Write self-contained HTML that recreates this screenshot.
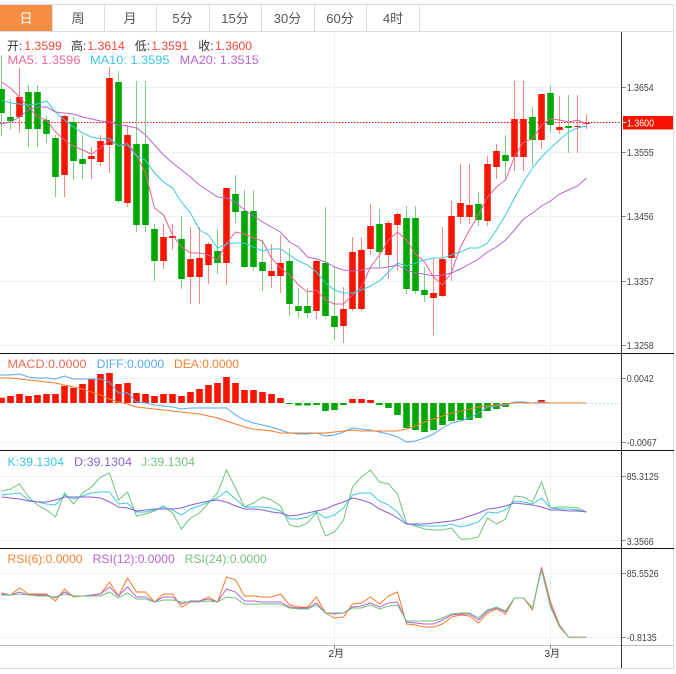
<!DOCTYPE html>
<html><head><meta charset="utf-8"><title>K线图</title>
<style>
html,body{margin:0;padding:0;background:#fff;width:676px;height:674px;overflow:hidden}
svg{display:block;font-family:"Liberation Sans","Noto Sans CJK SC",sans-serif}
.t{font-size:13px;fill:#555;text-anchor:middle}
.a{font-size:10px;fill:#444}
.l{font-size:12px}
</style></head><body>
<svg width="676" height="674" viewBox="0 0 676 674" xmlns="http://www.w3.org/2000/svg" fill="none">
<!-- frame and tabs -->
<rect x="0" y="5" width="52" height="26" fill="#f58d42"/>
<path d="M0 4.5H673.5V668.5H0M0 31.5H673M52.5 5V31M104.5 5V31M156.5 5V31M209.5 5V31M261.5 5V31M314.5 5V31M366.5 5V31M419.5 5V31" stroke="#dcdcdc"/>
<text x="26" y="23" class="t" style="fill:#fff">日</text>
<text x="78" y="23" class="t">周</text>
<text x="130" y="23" class="t">月</text>
<text x="182.500" y="23" class="t">5分</text>
<text x="235" y="23" class="t">15分</text>
<text x="287.500" y="23" class="t">30分</text>
<text x="340" y="23" class="t">60分</text>
<text x="393" y="23" class="t">4时</text>
<!-- grid -->
<path d="M0 87.500H621M0 152.500H621M0 216.500H621M0 281.500H621M0 345.500H621M0 378.500H621M0 442.500H621M0 476.500H621M0 540.500H621M0 573.500H621M0 637.500H621M334.500 32V645M550.500 32V645" stroke="#e9f1f4"/>
<!-- price line -->
<path d="M0 122.500H621" stroke="#f01010" stroke-dasharray="1.500 1.500"/>
<!-- wicks -->
<path stroke="#f88a80" d="M19.5 68V133M64.5 115V197M91.5 147V179M100.5 135V166M109.5 67V173M127.5 125V207M163.5 224V269M172.5 224V250M190.5 227V304M199.5 227V304M208.5 242V284M226.5 188V285M271.5 244V288M280.5 235V293M316.5 260V319M343.5 287V343M352.5 237V311M361.5 237V311M370.5 204V255M388.5 221V279M397.5 212V271M433.5 259V335M442.5 227V297M451.5 201V281M460.5 164V224M469.5 164V224M487.5 156V226M496.5 144V179M514.5 81V171M523.5 81V171M541.5 94V149M559.5 96V134M577.5 95V153M586.5 114V129"/>
<path stroke="#7fd07f" d="M1.5 55V136M10.5 99V130M28.5 85V147M37.5 85V147M46.5 116V143M55.5 135V197M73.5 117V180M82.5 135V179M118.5 71V203M136.5 81V232M145.5 81V232M154.5 224V281M181.5 216V289M217.5 229V274M235.5 175V223M244.5 190V268M253.5 190V271M262.5 240V291M289.5 248V316M298.5 288V318M307.5 288V318M325.5 207V318M334.5 267V340M379.5 209V267M406.5 206V294M415.5 206V294M424.5 267V302M478.5 192V226M505.5 135V181M532.5 107V166M550.5 85V133M568.5 95V153"/>
<!-- bodies -->
<path stroke="#f51500" stroke-width="6.600" d="M19.5 97V117M64.5 116V175M91.5 156V159M100.5 141V162M109.5 78V145M127.5 135V203M163.5 237V261M172.5 236V238M190.5 259V277M199.5 258V277M208.5 244V265M226.5 188V263M271.5 271V276M280.5 263V276M316.5 261V311M343.5 309V326M352.5 252V309M361.5 250V309M370.5 226V249M388.5 223V255M397.5 214V225M433.5 293V298M442.5 259V296M451.5 216V258M460.5 203V217M469.5 205V217M487.5 164V221M496.5 151V167M514.5 119V157M523.5 119V157M541.5 94V140M559.5 127V130M577.5 126V127M586.5 123V124"/>
<path stroke="#00a800" stroke-width="6.600" d="M1.5 89V113M10.5 117V121M28.5 92V129M37.5 92V129M46.5 120V134M55.5 138V177M73.5 122V161M82.5 159V164M118.5 82V201M136.5 144V225M145.5 144V225M154.5 229V261M181.5 239V279M217.5 251V263M235.5 194V212M244.5 211V267M253.5 211V267M262.5 262V271M289.5 261V304M298.5 306V311M307.5 306V313M325.5 263V316M334.5 316V327M379.5 224V252M406.5 218V289M415.5 218V291M424.5 290V295M478.5 204V220M505.5 155V161M532.5 117V140M550.5 93V125M568.5 126V128"/>
<!-- MA lines -->
<path stroke="#ec5f96" d="M1.5 82 10.5 88 19.5 97 28.5 107 37.5 117 46.5 120 55.5 132 64.500 140 73.5 146 82.5 150 91.5 154 100.5 148 109.5 140 118.5 146 127.5 143 136.5 155 145.5 173 154.5 208 163.5 215 172.5 235 181.5 247 190.5 253 199.5 253 208.5 255 217.5 260 226.5 243 235.5 232 244.5 234 253.5 238 262.5 241 271.5 258 280.5 268 289.5 275 298.5 285 307.5 292 316.5 290 325.5 300 334.5 304 343.5 304 352.5 295 361.5 287 370.5 267 379.5 255 388.5 240 397.5 232 406.5 240 415.5 254 424.5 262 433.5 277 442.5 285 451.5 272 460.5 247 469.5 230 478.5 215 487.5 197 496.5 187 505.5 180 514.5 157 523.5 142 532.5 139 541.5 125 550.5 119 559.5 120 568.5 122 577.5 120 586.5 124"/>
<path stroke="#3cc9e0" d="M1.5 100 10.5 103 19.5 104 28.5 105 37.5 104 46.5 101 55.5 112 64.5 120 73.5 127 82.5 133 91.5 137 100.5 139 109.5 138 118.5 146 127.5 145 136.5 156 145.5 160 154.5 173 163.5 182 172.5 188 181.5 202 190.5 213 199.5 230 208.5 235 217.5 248 226.5 244 235.5 243 244.5 243 253.5 247 262.5 251 271.5 249 280.5 249 289.5 255 298.5 261 307.5 265 316.5 272 325.5 283 334.5 290 343.5 293 352.5 293 361.5 290 370.5 286 379.5 281 388.5 272 397.5 263 406.5 266 415.5 263 424.5 260 433.5 258 442.5 258 451.5 255 460.5 252 469.5 248 478.5 248 487.5 243 496.5 230 505.5 215 514.5 198 523.5 182 532.5 168 541.5 157 550.5 148 559.5 140 568.5 132 577.5 128 586.5 126"/>
<path stroke="#b565cf" d="M0 124 10.5 122 19.5 117 28.5 110 37.5 107 46.5 107 55.5 112 64.5 113 73.5 114 82.5 117 91.5 119 100.5 121 109.5 122 118.5 125 127.5 126 136.5 128 145.5 135 154.5 145 163.5 155 172.5 163 181.5 170 190.5 177 199.5 185 208.5 191 217.5 197 226.5 198 235.5 202 244.5 210 253.5 216 262.5 222 271.5 227 280.5 232 289.5 242 298.5 247 307.5 257 316.5 259 325.5 262 334.5 267 343.5 270 352.5 271 361.5 270 370.5 268 379.5 268 388.5 267 397.5 265 406.5 270 415.5 273 424.5 274 433.5 276 442.5 275 451.5 273 460.5 269 469.5 264 478.5 259 487.5 252 496.5 247 505.5 240 514.5 230 523.5 219 532.5 213 541.5 206 550.5 201 559.5 194 568.5 190 577.5 186 586.5 178"/>
<!-- MACD bars -->
<path stroke="#f51500" stroke-width="6.600" d="M1.5 397.700V403M10.5 396V403M19.5 394V403M28.5 396V403M37.5 395V403M46.5 394V403M55.5 394V403M64.5 386V403M73.5 388V403M82.5 384V403M91.5 379V403M100.5 374V403M109.5 373V403M118.5 384V403M127.5 383V403M136.5 393V403M145.5 394V403M154.5 396V403M163.5 394V403M172.5 394V403M181.5 396V403M190.5 392V403M199.5 389V403M208.5 385V403M217.5 383V403M226.5 377V403M235.5 383V403M244.5 390V403M253.5 390V403M262.5 392V403M271.5 394V403M280.5 398V403M352.5 399V403M361.5 399V403M370.5 400V403M541.5 400V403"/>
<path stroke="#00a800" stroke-width="6.600" d="M289.5 403V404M298.5 403V405.500M307.5 403V405.500M316.5 403V405M325.5 403V411M334.5 403V410M343.5 403V405M379.5 403V405M388.5 403V408M397.5 403V415M406.5 403V428M415.5 403V430M424.5 403V432M433.5 403V430M442.5 403V425M451.5 403V421M460.5 403V420M469.5 403V420M478.5 403V418M487.5 403V411M496.5 403V409M505.5 403V407"/>
<path stroke="#b6def2" stroke-dasharray="2 2" d="M587 403.500H620"/>
<path stroke="#5aa9ee" d="M0 375 10.5 375 19.5 374 28.5 377 37.5 378 46.5 378 55.5 379 64.5 376 73.5 379 82.5 379 91.5 379 100.5 379 109.5 382 118.5 393 127.5 393 136.5 402 145.5 403 154.5 405 163.5 406 172.5 407 181.5 409 190.5 408 199.5 408 208.5 408 217.5 408 226.5 408 235.5 415 244.5 420 253.5 423 262.5 425 271.5 427 280.5 430 289.5 433 298.5 434 307.5 434 316.5 433 325.5 436 334.5 435 343.5 432 352.5 428 361.5 429 370.5 430 379.5 432 388.5 434 397.5 437 406.5 442 415.5 441 424.5 438 433.5 434 442.5 428 451.5 423 460.5 421 469.5 418 478.5 413 487.5 407 496.5 406 505.5 405 514.5 402 523.5 402 532.5 403 541.5 402 550.5 403 586.5 403"/>
<path stroke="#f47a2b" d="M0 378 10.5 378 19.5 379 28.5 380 37.5 381 46.5 382 55.5 383 64.5 385 73.5 387 82.5 389 91.5 392 100.5 395 109.5 399 118.5 402 127.5 404 136.5 407 145.5 408 154.5 409 163.5 410 172.5 411 181.5 412 190.5 413 199.5 414 208.5 416 217.5 418 226.5 421 235.5 424 244.5 427 253.5 429 262.5 430 271.5 431 280.5 433 289.5 433 298.5 433 307.5 433 316.5 433 325.5 433 334.5 432 343.5 431 352.5 430 361.5 431 370.5 431 379.5 431 388.5 431 397.5 431 406.5 429 415.5 426 424.5 422 433.5 419 442.5 416 451.5 413 460.5 411 469.5 409 478.5 407 487.5 406 496.5 405 505.5 404 514.5 403 586.5 403"/>
<!-- KDJ -->
<path stroke="#72c27a" d="M1.5 491 10.5 489 19.5 484 28.5 497 37.5 505 46.5 510 55.5 517 64.5 493 73.5 504 82.5 493 91.5 487 100.5 477 109.5 473 118.5 500 127.5 492 136.5 516 145.5 514 154.5 511 163.5 506 172.5 513 181.5 529 190.5 518 199.5 513 208.5 503 217.5 493 226.5 470 235.5 488 244.5 507 253.5 503 262.5 497 271.5 500 280.5 506 289.5 525 298.5 527 307.5 523 316.5 513 325.5 536 334.5 532 343.5 520 352.5 487 361.5 477 370.5 470 379.5 482 388.5 484 397.5 494 406.5 523 415.5 526 424.5 529 433.5 530 442.5 530 451.5 528 460.5 539 469.5 539 478.5 537 487.5 518 496.5 524 505.5 519 514.5 496 523.5 497 532.5 502 541.5 482 550.5 508 559.5 507 568.5 507 577.5 508 586.5 512"/>
<path stroke="#3fcbe0" d="M1.5 495 10.5 494 19.5 493 28.5 500 37.5 502 46.5 504 55.5 505 64.5 495 73.5 499 82.5 496 91.5 493 100.5 492 109.5 492 118.5 504 127.5 503 136.5 512 145.5 512 154.5 510 163.5 507 172.5 510 181.5 515 190.5 509 199.5 506 208.5 502 217.5 498 226.5 491 235.5 499 244.5 507 253.5 507 262.5 507 271.5 508 280.5 511 289.5 519 298.5 519 307.5 517 316.5 512 325.5 518 334.5 515 343.5 508 352.5 495 361.5 493 370.5 493 379.5 501 388.5 505 397.5 512 406.5 524 415.5 525 424.5 526 433.5 526 442.5 526 451.5 524 460.5 527 469.5 525 478.5 522 487.5 512 496.5 513 505.5 510 514.5 501 523.5 502 532.5 504 541.5 498 550.5 508 559.5 509 568.5 509 577.5 510 586.5 512"/>
<path stroke="#8a5fd0" d="M1.5 497 10.5 498 19.5 499 28.5 501 37.5 502 46.5 502 55.5 500 64.5 497 73.5 497 82.5 497 91.5 497 100.5 498 109.5 502 118.5 507 127.5 508 136.5 511 145.5 510 154.5 509 163.5 509 172.5 509 181.5 508 190.5 505 199.5 503 208.5 501 217.5 500 226.5 502 235.5 506 244.5 509 253.5 509 262.5 510 271.5 512 280.5 513 289.5 516 298.5 515 307.5 513 316.5 511 325.5 509 334.5 505 343.5 502 352.5 498 361.5 500 370.5 503 379.5 509 388.5 513 397.5 518 406.5 524 415.5 524 424.5 524 433.5 523 442.5 522 451.5 521 460.5 519 469.5 516 478.5 513 487.5 509 496.5 508 505.5 506 514.5 503 523.5 504 532.5 505 541.5 507 550.5 510 559.5 510 568.5 511 577.5 511 586.5 512"/>
<!-- RSI -->
<path stroke="#f47a2b" d="M1.5 593 10.5 595 19.5 588 28.5 594 37.5 594 46.5 594 55.5 601 64.5 589 73.5 597 82.5 596 91.5 596 100.5 594 109.5 582 118.5 596 127.5 578 136.5 592 145.5 592 154.5 602 163.5 594 172.5 594 181.5 607 190.5 602 199.5 601 208.5 597 217.5 602 226.5 577 235.5 580 244.5 596 253.5 596 262.5 597 271.5 597 280.5 594 289.5 605 298.5 607 307.5 607 316.5 597 325.5 613 334.5 618 343.5 617 352.5 604 361.5 603 370.5 597 379.5 604 388.5 596 397.5 592 406.5 624 415.5 625 424.5 627 433.5 627 442.5 624 451.5 617 460.5 615 469.5 616 478.5 623 487.5 613 496.5 609 505.5 614 514.5 598 523.5 598 532.5 610 541.5 567 550.5 602 559.5 625 568.5 637 586.5 637"/>
<path stroke="#b565cf" d="M1.5 594 10.5 595 19.5 592 28.5 595 37.5 595 46.5 595 55.5 598 64.5 592 73.5 596 82.5 596 91.5 595 100.5 594 109.5 587 118.5 596 127.5 587 136.5 597 145.5 597 154.5 602 163.5 597 172.5 597 181.5 604 190.5 601 199.5 601 208.5 599 217.5 602 226.5 589 235.5 592 244.5 601 253.5 601 262.5 602 271.5 602 280.5 602 289.5 607 298.5 608 307.5 608 316.5 603 325.5 613 334.5 614 343.5 613 352.5 607 361.5 606 370.5 603 379.5 607 388.5 603 397.5 602 406.5 622 415.5 623 424.5 624 433.5 624 442.5 620 451.5 615 460.5 614 469.5 614 478.5 620 487.5 611 496.5 608 505.5 612 514.5 598 523.5 598 532.5 608 541.5 568 550.5 605 559.5 626 568.5 637 586.5 637"/>
<path stroke="#72c27a" d="M1.5 595 10.5 595 19.5 594 28.5 595 37.5 596 46.5 596 55.5 597 64.5 594 73.5 596 82.5 596 91.5 596 100.5 596 109.5 592 118.5 598 127.5 593 136.5 599 145.5 599 154.5 602 163.5 600 172.5 600 181.5 602 190.5 602 199.5 602 208.5 601 217.5 602 226.5 597 235.5 598 244.5 604 253.5 604 262.5 604 271.5 604 280.5 604 289.5 608 298.5 609 307.5 609 316.5 605 325.5 613 334.5 613 343.5 613 352.5 608 361.5 608 370.5 605 379.5 609 388.5 606 397.5 605 406.5 621 415.5 621 424.5 621 433.5 621 442.5 618 451.5 614 460.5 613 469.5 613 478.5 618 487.5 610 496.5 607 505.5 611 514.5 598 523.5 598 532.5 608 541.5 570 550.5 607 559.5 627 568.5 637 586.5 637"/>
<path stroke="#b9b9a8" stroke-width="1.500" d="M568.5 637.500H586.5"/>
<!-- panel lines -->
<path stroke="#111" d="M0 353.500H674M0 450.500H674M0 548.500H674"/>
<path stroke="#bdbdbd" d="M0 645.500H673"/>
<path stroke="#333" d="M621.500 32V668"/>
<path stroke="#888" d="M622 87.500H626M622 152.500H626M622 216.500H626M622 281.500H626M622 345.500H626M622 378.500H626M622 442.500H626M622 476.500H626M622 540.500H626M622 573.500H626M622 637.500H626M334.500 645V649M550.500 645V649"/>
<!-- price tag -->
<rect x="623" y="116" width="50" height="13.500" fill="#f51500"/>
<path stroke="#fff" d="M623 122.500H626"/>
<text x="627" y="126.500" class="a" style="fill:#fff" textLength="27" lengthAdjust="spacingAndGlyphs">1.3600</text>
<!-- axis labels -->
<text x="626.700" y="91" class="a" textLength="27" lengthAdjust="spacingAndGlyphs">1.3654</text>
<text x="626.700" y="156" class="a" textLength="27" lengthAdjust="spacingAndGlyphs">1.3555</text>
<text x="626.700" y="220" class="a" textLength="27" lengthAdjust="spacingAndGlyphs">1.3456</text>
<text x="626.700" y="285" class="a" textLength="27" lengthAdjust="spacingAndGlyphs">1.3357</text>
<text x="626.700" y="349" class="a" textLength="27" lengthAdjust="spacingAndGlyphs">1.3258</text>
<text x="626.700" y="382" class="a" textLength="27" lengthAdjust="spacingAndGlyphs">0.0042</text>
<text x="626.700" y="446" class="a" textLength="30" lengthAdjust="spacingAndGlyphs">-0.0067</text>
<text x="626.700" y="480" class="a" textLength="32" lengthAdjust="spacingAndGlyphs">85.3125</text>
<text x="626.700" y="545" class="a" textLength="27" lengthAdjust="spacingAndGlyphs">3.3566</text>
<text x="626.700" y="577" class="a" textLength="32" lengthAdjust="spacingAndGlyphs">85.5526</text>
<text x="626.700" y="641" class="a" textLength="30" lengthAdjust="spacingAndGlyphs">-0.8135</text>
<text x="328.500" y="657" class="a" style="fill:#333">2月</text>
<text x="544.500" y="657" class="a" style="fill:#333">3月</text>
<!-- legends -->
<text x="7" y="50" class="l" fill="#333">开:</text>
<text x="24.300" y="50" class="l" fill="#f2483a" textLength="37.500" lengthAdjust="spacingAndGlyphs">1.3599</text>
<text x="71" y="50" class="l" fill="#333">高:</text>
<text x="87.300" y="50" class="l" fill="#f2483a" textLength="37.500" lengthAdjust="spacingAndGlyphs">1.3614</text>
<text x="134.700" y="50" class="l" fill="#333">低:</text>
<text x="151.300" y="50" class="l" fill="#f2483a" textLength="37" lengthAdjust="spacingAndGlyphs">1.3591</text>
<text x="198.300" y="50" class="l" fill="#333">收:</text>
<text x="215" y="50" class="l" fill="#f2483a" textLength="37" lengthAdjust="spacingAndGlyphs">1.3600</text>
<text x="7.500" y="64" class="l" fill="#ec6a96" textLength="73" lengthAdjust="spacingAndGlyphs">MA5: 1.3596</text>
<text x="90" y="64" class="l" fill="#3ec8e0" textLength="79.500" lengthAdjust="spacingAndGlyphs">MA10: 1.3595</text>
<text x="179.700" y="64" class="l" fill="#b565cf" textLength="79" lengthAdjust="spacingAndGlyphs">MA20: 1.3515</text>
<text x="7.500" y="368" class="l" fill="#ef6a5a" textLength="79" lengthAdjust="spacingAndGlyphs">MACD:0.0000</text>
<text x="96.700" y="368" class="l" fill="#5aa8ee" textLength="67.500" lengthAdjust="spacingAndGlyphs">DIFF:0.0000</text>
<text x="174" y="368" class="l" fill="#f4822f" textLength="65" lengthAdjust="spacingAndGlyphs">DEA:0.0000</text>
<text x="7.500" y="466" class="l" fill="#3ec8e0" textLength="56.500" lengthAdjust="spacingAndGlyphs">K:39.1304</text>
<text x="74" y="466" class="l" fill="#8a68c8" textLength="58" lengthAdjust="spacingAndGlyphs">D:39.1304</text>
<text x="141" y="466" class="l" fill="#77c17f" textLength="54" lengthAdjust="spacingAndGlyphs">J:39.1304</text>
<text x="7.500" y="563" class="l" fill="#f4822f" textLength="75" lengthAdjust="spacingAndGlyphs">RSI(6):0.0000</text>
<text x="92.700" y="563" class="l" fill="#b565cf" textLength="82" lengthAdjust="spacingAndGlyphs">RSI(12):0.0000</text>
<text x="184.700" y="563" class="l" fill="#77c17f" textLength="82" lengthAdjust="spacingAndGlyphs">RSI(24):0.0000</text>
</svg>
</body></html>
